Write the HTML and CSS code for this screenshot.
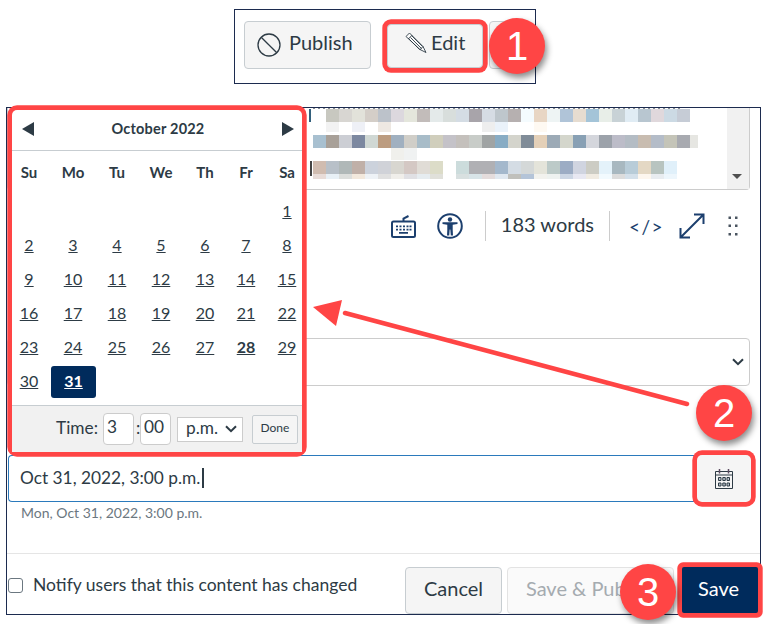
FILE: index.html
```html
<!DOCTYPE html>
<html lang="en">
<head>
  <meta charset="UTF-8">
  <title>Edit page with a publish date</title>
  <link rel="stylesheet" href="styles.css">
</head>
<body>
<div class="topbar">
  <button class="btn publish">
    <svg class="ico-publish" viewBox="0 0 24 24"><circle cx="12" cy="12" r="11"/><path d="M4.200 4.200l15.600 15.600"/></svg>
    Publish
  </button>
  <button class="btn edit mark">
    <svg class="ico-pencil" viewBox="0 0 22 22"><path d="M1 4.500l3.500-3.500 13.500 13.500 3 6-6-3z"/><path d="M3.300 7l3.700-3.700M5.500 5.500l11 11M3.500 6.500l11 11M6.500 3.500l11 11M14.700 18l3.300-3.500"/></svg>
    Edit
  </button>
  <button class="btn more"></button>
</div>

<div class="panel">
  <div class="editor">
    <div class="blur">
      <div class="dash"></div>
      <div class="cut one"></div>
      <div class="cut two"></div>
      <div class="row first">
        <i style="background:#c8c8c0"></i><i style="background:#d8d6d2"></i><i style="background:#e2e2da"></i><i style="background:#d4cec8"></i><i style="background:#bcc2ca"></i><i style="background:#dcd8de"></i><i style="background:#e4e6dc"></i><i style="background:#c2bcba"></i><i style="background:#e4eaea"></i><i style="background:#d8dedc"></i><i style="background:#d4dce4"></i><i style="background:#a8a4aa"></i><i style="background:#d6dce4"></i><i style="background:#bec6cc"></i><i style="background:#b6b0b0"></i><i style="background:#f4fbfe"></i><i style="background:#e8d6c4"></i><i style="background:#eef4f4"></i><i style="background:#b0c4d8"></i><i style="background:#e6dcd0"></i><i style="background:#a4c4d8"></i><i style="background:#e8eee8"></i><i style="background:#c8d2d6"></i><i style="background:#e0ecf4"></i><i style="background:#b8c6d0"></i><i style="background:#e0d8dc"></i><i style="background:#ccdae4"></i><i style="background:#c6ccd6"></i>
      </div>
      <div class="row first faint-a">
        <i style="background:#f2f2f2"></i><i></i><i style="background:#eef0f6"></i><i></i><i style="background:#eee8e2"></i><i></i><i></i><i></i><i></i><i></i><i></i><i></i><i style="background:#eeeeee"></i><i style="background:#eaf2fa"></i><i></i><i></i><i style="background:#fef9f2"></i>
      </div>
      <div class="row second">
        <i style="background:#a8c0d0"></i><i style="background:#a8a098"></i><i style="background:#ccced4"></i><i style="background:#7c88a0"></i><i style="background:#d0d8d4"></i><i style="background:#bc9c80"></i><i style="background:#a0b0c0"></i><i style="background:#d0cec8"></i><i style="background:#a8bcc8"></i><i style="background:#d0cebc"></i><i style="background:#c4c2c8"></i><i style="background:#c4c0bc"></i><i style="background:#c8ccc8"></i><i style="background:#a0a4a4"></i><i style="background:#88acc4"></i><i style="background:#d4d4cc"></i><i style="background:#808c98"></i><i style="background:#e4d0b8"></i><i style="background:#9caab6"></i><i style="background:#d4d6cc"></i><i style="background:#88a0b4"></i><i style="background:#d4d6dc"></i><i style="background:#9ca2aa"></i><i style="background:#bcbcc8"></i><i style="background:#b4bcc4"></i><i style="background:#c8bcb0"></i><i style="background:#b4bcc8"></i><i style="background:#c4c4b8"></i><i style="background:#a8aab0"></i><i class="thin" style="background:#e6e6e2"></i>
      </div>
      <div class="row second faint-b">
        <i></i><i></i><i></i><i></i><i></i><i></i><i style="background:#f0f0ec"></i><i style="background:#f0f2f2"></i>
      </div>
      <div class="row second third">
        <i style="background:#d0bcb0"></i><i style="background:#b8c0c8"></i><i style="background:#b0b8b8"></i><i style="background:#c0b0a8"></i><i style="background:#ccd2dc"></i><i style="background:#d0d2d8"></i><i style="background:#d8d6d0"></i><i style="background:#d4c8c4"></i><i style="background:#e0dcd6"></i><i style="background:#dcdcc8"></i><i></i><i style="background:#ccdcdc"></i><i style="background:#b0b0b4"></i><i style="background:#b0b0b4"></i><i style="background:#a4b8cc"></i><i style="background:#d4dce4"></i><i style="background:#d4d8d8"></i><i style="background:#e4e4da"></i><i style="background:#bccac8"></i><i style="background:#9cacc4"></i><i style="background:#d0d4e0"></i><i style="background:#ccccc4"></i><i style="background:#e4f2fa"></i><i style="background:#a8b8c0"></i><i style="background:#b8ccd8"></i><i style="background:#e4d8c4"></i><i style="background:#b8c4c0"></i><i style="background:#e0f0fa"></i>
      </div>
      <div class="row second faint-c">
        <i style="background:#e8dcd8"></i><i style="background:#e8f0f6"></i><i style="background:#dcdedc"></i><i style="background:#f2e8dc"></i><i style="background:#eef2f6"></i><i style="background:#e0e0e0"></i><i style="background:#f0eeea"></i><i style="background:#e0e0e4"></i><i style="background:#e6ecf0"></i><i style="background:#e0e0da"></i><i></i><i style="background:#d8e0e0"></i><i style="background:#d8e4e8"></i><i style="background:#e4dcdc"></i><i style="background:#e0e8f0"></i><i style="background:#c0c0bc"></i><i style="background:#b4c4d8"></i><i style="background:#f2f2ee"></i><i style="background:#eef2f0"></i><i style="background:#ccd6e4"></i><i style="background:#e8e8f2"></i><i style="background:#f0ebe2"></i><i style="background:#f2fafe"></i><i style="background:#dcdcdc"></i><i style="background:#d4e0ea"></i><i style="background:#fdf6ee"></i><i style="background:#e8ecf0"></i><i style="background:#edf6fc"></i>
      </div>
    </div>
    <div class="scroll"><span class="scroll-down"></span></div>
  </div>

  <div class="status">
    <svg class="ico-keyboard" viewBox="0 0 25 23"><path class="line" d="M12.500 6v-2.500l5-2.500"/><rect class="line" x="1" y="6.500" width="23" height="15.500" rx="1.500"/><path class="dots" d="M5 10.500h2v1.800h-2zM8.500 10.500h2v1.800h-2zM12 10.500h2v1.800h-2zM15.500 10.500h2v1.800h-2zM18.500 10.500h2v1.800h-2zM5 13.800h2v1.800h-2zM8.500 13.800h2v1.800h-2zM12 13.800h2v1.800h-2zM15.500 13.800h2v1.800h-2zM18.500 13.800h2v1.800h-2zM8 17h9v1.800h-9z"/></svg>
    <svg class="ico-a11y" viewBox="0 0 26 26"><circle class="line" cx="13" cy="13" r="11.800"/><circle class="dots" cx="13" cy="6.500" r="2.200"/><path class="dots" d="M5.500 9.200h15v1.800l-4.800 0.800v5l0.300 5.700h-2.200l-0.500-6h-0.600l-0.500 6h-2.200l0.300-5.700v-5l-4.800-0.800z"/></svg>
    <span class="sep"></span>
    <span class="words">183 words</span>
    <span class="sep last"></span>
    <span class="code">&lt;/&gt;</span>
    <svg class="ico-expand" viewBox="0 0 26 26"><path class="line" d="M2 24l22-22M15 1.500h9.500v9.500M1.500 15v9.500h9.500"/></svg>
    <svg class="ico-drag" viewBox="0 0 10 20"><path class="grip" d="M0.500 0.500h2.500v2.500h-2.500zM7 0.500h2.500v2.500h-2.500zM0.500 8.500h2.500v2.500h-2.500zM7 8.500h2.500v2.500h-2.500zM0.500 17h2.500v2.500h-2.500zM7 17h2.500v2.500h-2.500z"/></svg>
  </div>

  <div class="picker">
    <svg class="ico-chevron" viewBox="0 0 12 8"><path d="M1 1.200l5 5 5-5"/></svg>
  </div>

  <div class="date-row">
    <div class="date-input">Oct 31, 2022, 3:00 p.m.<span class="caret"></span></div>
    <button class="date-btn mark">
      <svg class="ico-cal" viewBox="0 0 18 20"><path class="top" d="M0.500 2.500h17v17h-17z"/><path class="pin" d="M4.500 0v4.500M13.500 0v4.500"/><path class="top" d="M0.500 6h17"/><path class="box" d="M3.500 8.500h2.500v3h-2.500zM7.800 8.500h2.500v3h-2.500zM12 8.500h2.500v3h-2.500zM3.500 14h2.500v3h-2.500zM7.800 14h2.500v3h-2.500zM12 14h2.500v3h-2.500z"/></svg>
    </button>
  </div>
  <div class="hint">Mon, Oct 31, 2022, 3:00 p.m.</div>

  <div class="foot">
    <label class="notify"><input type="checkbox" class="check"><span class="notify-text">Notify users that this content has changed</span></label>
    <button class="btn cancel">Cancel</button>
    <button class="btn off">Save &amp; Publish</button>
    <button class="btn save mark">Save</button>
  </div>

  <div class="calendar mark">
    <div class="cal-head">
      <span class="prev"></span>
      <span class="month">October 2022</span>
      <span class="next"></span>
    </div>
    <div class="cal-grid names">
      <span>Su</span><span>Mo</span><span>Tu</span><span>We</span><span>Th</span><span>Fr</span><span>Sa</span>
    </div>
    <div class="cal-grid days">
      <span></span><span></span><span></span><span></span><span></span><span></span><a>1</a>
      <a>2</a><a>3</a><a>4</a><a>5</a><a>6</a><a>7</a><a>8</a>
      <a>9</a><a>10</a><a>11</a><a>12</a><a>13</a><a>14</a><a>15</a>
      <a>16</a><a>17</a><a>18</a><a>19</a><a>20</a><a>21</a><a>22</a>
      <a>23</a><a>24</a><a>25</a><a>26</a><a>27</a><a class="today">28</a><a>29</a>
      <a>30</a><a class="selected"><b>31</b></a>
    </div>
    <div class="cal-foot">
      <span class="up">Time:</span>
      <input class="time" value="3">
      <span class="colon up">:</span>
      <input class="time" value="00">
      <span class="ampm"><span class="up">p.m.</span><svg class="ico-chevron" viewBox="0 0 12 8"><path d="M1 1.200l5 5 5-5"/></svg></span>
      <button class="done">Done</button>
    </div>
  </div>

  <svg class="arrow" viewBox="0 0 400 120">
    <path d="M377 99L35 8" />
    <polygon points="3,2 32,-5 26,21"/>
  </svg>
</div>

<span class="num n1">1</span>
<span class="num n2">2</span>
<span class="num n3">3</span>
</body>
</html>
```
FILE: styles.css
```css
* {box-sizing: border-box;}
html, body {height: 624px; overflow: hidden;}
body {margin: 0; background: #fff; color: #2d3b45; font-family: "Lato", sans-serif; position: relative;}
button {font-family: inherit; color: inherit; padding: 0;}
svg {display: block; flex: none;}

.mark {box-shadow: 0 0 0 4.700px #ff4545; border-radius: 5px;}
.btn {border: 1px solid #c7cdd1; border-radius: 4px; background: #f5f5f5; font-size: 20px; height: 48px;}

/* top toolbar */
.topbar {display: flex; width: 302px; height: 75px; margin: 9px 0 0 234px; padding: 11px 9px; border: 1px solid #1c2b4f;}
.publish {display: flex; align-items: center; gap: 8px; width: 127px; padding: 0 0 6px 12px;}
.ico-publish {width: 24px; height: 24px; margin-top: 6px; fill: none; stroke: #2d3b45; stroke-width: 1.300;}
.edit {display: flex; align-items: center; gap: 4px; width: 96px; height: 44px; margin: 3px 0 0 16px; padding: 0 0 8px 17px;}
.ico-pencil {width: 22px; height: 22px; margin-top: 1px; fill: #fbfbfb; stroke: #2d3b45; stroke-width: .900;}
.more {width: 30px; margin-left: 6px;}

/* main form */
.panel {position: relative; width: 755px; height: 508px; margin: 23px 0 0 6px; border: 1px solid #1c2b4f;}

.editor {display: flex; width: 743px; height: 82px; border: 1px solid #ccc; border-top: 0; border-radius: 0 0 4px 4px;}
.blur {position: relative; flex: 1; padding-top: 1px;}
.row {display: flex; height: 13px; margin-left: 318px;}
.row i {flex: none; width: 13px;}
.row i.thin {width: 8px;}
.faint-a {height: 10px; margin-bottom: 3px;}
.second {margin-left: 305px;}
.faint-b {height: 12px; margin-bottom: 1px;}
.third {height: 13px;}
.faint-c {height: 5px;}
.dash {position: absolute; left: 305px; top: 0; width: 370px; height: 1px; background: repeating-linear-gradient(90deg, #8a8f94 0 2px, #fff 2px 5px);}
.cut {position: absolute; width: 2px; background: #33607c;}
.one {left: 301px; top: 1px; height: 13px;}
.two {left: 302px; top: 53px; height: 15px; background: #444;}
.scroll {position: relative; width: 22px; background: #f1f1f1;}
.scroll-down {position: absolute; left: 5px; bottom: 10px; border: 4px solid transparent; border-top: 5px solid #505050; border-left-width: 5px; border-right-width: 5px; border-bottom: 0;}

.status {display: flex; align-items: center; justify-content: flex-end; height: 30px; margin: 21px 22px 0 0; color: #2d3b45;}
.line {fill: none; stroke: #1c3f6e; stroke-width: 2;}
.dots {fill: #1c3f6e;}
.grip {fill: #4a5560;}
.ico-keyboard {width: 25px; height: 23px; margin-right: 21px;}
.ico-a11y {width: 26px; height: 26px; margin-right: 22px;}
.sep {width: 1px; height: 30px; background: #ccc;}
.sep.last {margin-right: 19px;}
.words {margin: 0 15px; padding-bottom: 4px; font-size: 20px;}
.code {width: 30px; margin-right: 20px; font-size: 19px; letter-spacing: 1.500px; color: #1c3f6e; white-space: nowrap;}
.ico-expand {width: 26px; height: 26px; margin-right: 23px;}
.ico-drag {width: 10px; height: 20px;}

.picker {display: flex; align-items: center; justify-content: flex-end; width: 743px; height: 48px; margin-top: 97px; padding-right: 5px; border: 1px solid #ccc; border-radius: 4px;}
.ico-chevron {width: 12px; height: 8px; fill: none; stroke: #2d3b45; stroke-width: 2;}

.date-row {display: flex; height: 47px; margin: 69px 9px 0 1px;}
.date-input {flex: 1; display: flex; align-items: center; padding: 0 0 2px 11px; font-size: 17.300px; border: 1px solid #2b7abc; border-right: 0; border-radius: 4px 0 0 4px;}
.caret {width: 2px; height: 20px; margin-left: 2px; background: #2d3b45;}
.date-btn {width: 54px; border: 0; background: #f5f5f5; display: flex; align-items: center; justify-content: center;}
.ico-cal {width: 18px; height: 20px; fill: none;}
.ico-cal .top {stroke: #2d3b45; stroke-width: 1;}
.ico-cal .pin {stroke: #5a4a60; stroke-width: 1.500;}
.ico-cal .box {fill: #b8c2ca; stroke: #2d3b45; stroke-width: 1;}
.hint {margin: 2px 0 0 14px; font-size: 14px; line-height: 18px; color: #6b7780;}

.foot {display: flex; align-items: flex-start; height: 61px; margin-top: 31px; padding: 13px 2px 0 1px; border-top: 1px solid #e5e5e5;}
.notify {display: flex; align-items: center; gap: 10px; margin-right: auto; height: 36px; font-size: 17.500px;}
.notify-text {padding-bottom: 2px;}
.check {appearance: none; width: 15px; height: 15px; margin: 0; border: 1.500px solid #6b7780; border-radius: 3px; background: #fff;}
.foot .btn {padding-bottom: 5px;}
.cancel {width: 97px; height: 47px;}
.off {width: 167px; height: 47px; margin: 0 8px 0 5px; background: #fafafa; color: #a5abb0; border-color: #e3e3e3;}
.foot .save {width: 76px; height: 46px; padding-right: 3px; background: #002b5c; color: #fff; border: 0; border-radius: 2px;}

/* date popup */
.calendar {position: absolute; left: 5px; top: 2px; width: 290px; height: 342px; background: #fff; display: flex; flex-direction: column; overflow: visible;}
.cal-head {display: flex; align-items: center; justify-content: space-between; flex: none; height: 41px; padding: 0 8px 3px 10px; border-bottom: 1px solid #c7cdd1;}
.prev {border: 7.500px solid transparent; border-left: 0; border-right: 12px solid #2d3b45;}
.next {border: 7.500px solid transparent; border-right: 0; border-left: 12px solid #2d3b45;}
.month {font-size: 14.500px; font-weight: 700; letter-spacing: .2px;}
.cal-grid {display: grid; grid-template-columns: repeat(5, 44px) 38px 44px; margin-left: -5px; text-align: center;}
.names {flex: none; height: 43px; padding-top: 11px; font-size: 15px; font-weight: 700; line-height: 20px;}
.days {grid-auto-rows: 34px; font-size: 16px; line-height: 34px;}
.days a {text-decoration: underline; color: #2d3b45;}
.today {font-weight: 700;}
.selected {display: block; width: 45px; height: 32px; margin-top: 2px; line-height: 30px; background: #002b5c; border-radius: 3px; color: #fff !important;}
.selected b {color: #fff;}
.cal-foot {display: flex; align-items: center; margin-top: auto; height: 47px; padding: 0 4px 0 44px; background: #f1f1f1; border-top: 1px solid #c7cdd1; font-size: 17.300px;}
.up {position: relative; top: -2px;}
.time {width: 31px; height: 32px; margin-left: 5px; padding: 0 3px 5px; font: inherit; color: inherit; background: #fff; border: 1px solid #ccc; border-radius: 4px;}
.colon {width: 6px; margin: 0 -2px 0 2px;}
.time + .colon + .time {margin-left: 0;}
.ampm {display: flex; align-items: center; justify-content: space-between; width: 66px; height: 25px; margin-left: 6px; padding: 0 5px 0 8px; background: #fff; border: 1px solid #ccc;}
.done {width: 46px; height: 29px; margin-left: 9px; padding-bottom: 4px; font-size: 12px; background: #f5f5f5; border: 1px solid #c7cdd1; border-radius: 2px;}

/* annotations */
.arrow {position: absolute; left: 303px; top: 197px; width: 400px; height: 120px; overflow: visible;}
.arrow path {fill: none; stroke: #ff4545; stroke-width: 4.500; stroke-linecap: round;}
.arrow polygon {fill: #ff4545;}
.num {position: absolute; display: flex; align-items: center; justify-content: center; width: 56px; height: 56px; border-radius: 50%; background: #ff4545; color: #fff; font-family: "Liberation Sans", sans-serif; font-size: 40px; box-shadow: 2px 4px 6px rgba(0,0,0,.45);}
.n1 {left: 489px; top: 18px;}
.n2 {left: 696px; top: 385px;}
.n3 {left: 620px; top: 564px;}
```
